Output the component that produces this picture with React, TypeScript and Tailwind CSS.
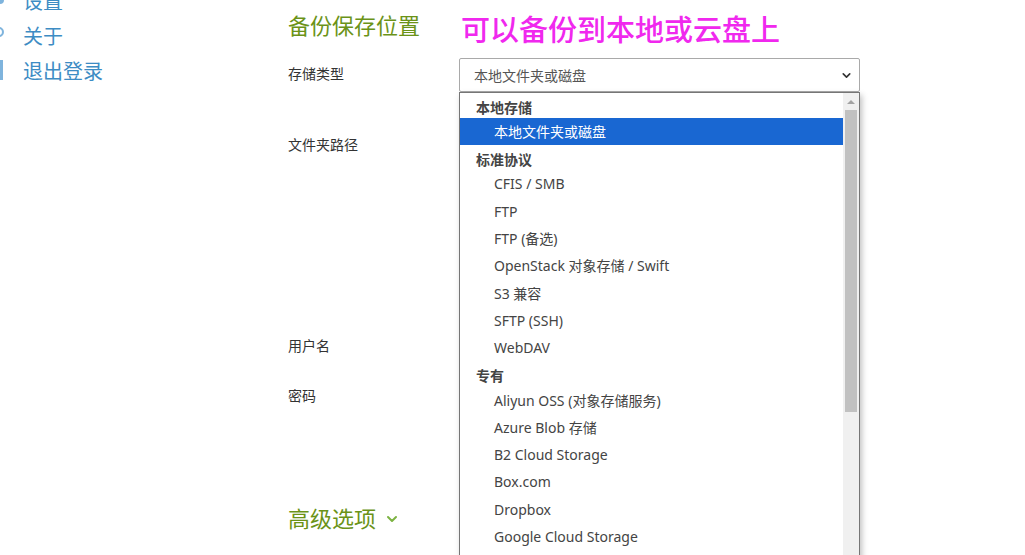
import { ChevronDown } from 'lucide-react';

const font = { fontFamily: '"Noto Sans", "Noto Sans CJK SC", sans-serif' };

const groups = [
  { label: '本地存储', items: ['本地文件夹或磁盘'] },
  {
    label: '标准协议',
    items: ['CFIS / SMB', 'FTP', 'FTP (备选)', 'OpenStack 对象存储 / Swift', 'S3 兼容', 'SFTP (SSH)', 'WebDAV'],
  },
  {
    label: '专有',
    items: ['Aliyun OSS (对象存储服务)', 'Azure Blob 存储', 'B2 Cloud Storage', 'Box.com', 'Dropbox', 'Google Cloud Storage', 'Google Drive'],
  },
];

function Sidebar() {
  return (
    <div className="relative w-[288px] shrink-0">
      {/* cut-off icons on the far left */}
      <div className="absolute left-[-6px] top-[-6px] w-[10px] h-[10px] rounded-sm bg-[#7fb4dd]" />
      <div className="absolute left-[-6px] top-[27px] w-[10px] h-[10px] rounded-full border-2 border-[#7fb4dd]" />
      <div className="absolute left-[0px] top-[60px] w-[3px] h-[20px] bg-[#7fb4dd]" />
      <ul className="-mt-[16px] pl-[23px] text-[20px] leading-[35px] text-[#3d8cc4]">
        <li>设置</li>
        <li>关于</li>
        <li>退出登录</li>
      </ul>
    </div>
  );
}

function Dropdown() {
  return (
    <div className="absolute left-0 top-[34px] w-[401px] h-[480px] bg-white border border-[#767676] shadow-[2px_3px_6px_rgba(0,0,0,0.25)] flex overflow-hidden">
      <div className="flex-1">
        {groups.map((g) => (
          <div key={g.label}>
            <div className="h-[25px] pt-[4px] pl-[16px] flex items-center text-[14px] font-bold text-[#444]">{g.label}</div>
            {g.items.map((it, i) => (
              <div
                key={it}
                className={
                  g.label === '本地存储' && i === 0
                    ? 'h-[27.3px] pl-[34px] flex items-center text-[14px] bg-[#1967d2] text-white'
                    : 'h-[27.3px] pl-[34px] flex items-center text-[14px] text-[#444]'
                }
              >
                {it}
              </div>
            ))}
          </div>
        ))}
      </div>
      <div className="w-[16px] bg-[#f0f0f0] flex flex-col items-center">
        <div className="h-[17px] flex items-center justify-center">
          <div className="w-0 h-0 border-l-[4px] border-r-[4px] border-b-[4px] border-l-transparent border-r-transparent border-b-[#a3a3a3]" />
        </div>
        <div className="w-[12px] h-[302px] bg-[#c1c1c1]" />
      </div>
    </div>
  );
}

export default function App() {
  return (
    <div className="w-[1025px] h-[555px] overflow-hidden bg-white flex" style={font}>
      <Sidebar />
      <div className="flex-1 pt-[8px]">
        <div className="flex items-center h-[44px]">
          <h2 className="w-[173px] text-[22px] text-[#6b9318] mt-[-9px]">备份保存位置</h2>
          <span className="text-[29px] font-medium text-[#f028ee] mt-[-1px]">可以备份到本地或云盘上</span>
        </div>

        <div className="flex mt-[6px] h-[34px]">
          <label className="w-[171px] text-[14px] text-[#333] pt-[5px]">存储类型</label>
          <div className="relative w-[401px]">
            <div className="h-[34px] border border-[#a9a9a9] rounded-[2px] flex items-center justify-between pl-[14px] pr-[6px] text-[14px] text-[#555]">
              <span>本地文件夹或磁盘</span>
              <ChevronDown size={13} strokeWidth={3} className="text-[#333]" />
            </div>
            <Dropdown />
          </div>
        </div>

        <div className="flex mt-[42px] h-[34px]">
          <label className="w-[171px] text-[14px] text-[#333]">文件夹路径</label>
          <div className="w-[401px] h-[34px] border border-[#a9a9a9]" />
        </div>

        <div className="flex mt-[165px] h-[34px]">
          <label className="w-[171px] text-[14px] text-[#333] pt-[2px]">用户名</label>
          <div className="w-[401px] h-[34px] border border-[#a9a9a9]" />
        </div>

        <div className="flex mt-[16px] h-[34px]">
          <label className="w-[171px] text-[14px] text-[#333] pt-[2px]">密码</label>
          <div className="w-[401px] h-[34px] border border-[#a9a9a9]" />
        </div>

        <div className="flex items-center gap-[8px] mt-[85px] text-[22px] text-[#6b9318]">
          <span>高级选项</span>
          <ChevronDown size={16} strokeWidth={3} className="text-[#7cb342]" />
        </div>
      </div>
    </div>
  );
}
